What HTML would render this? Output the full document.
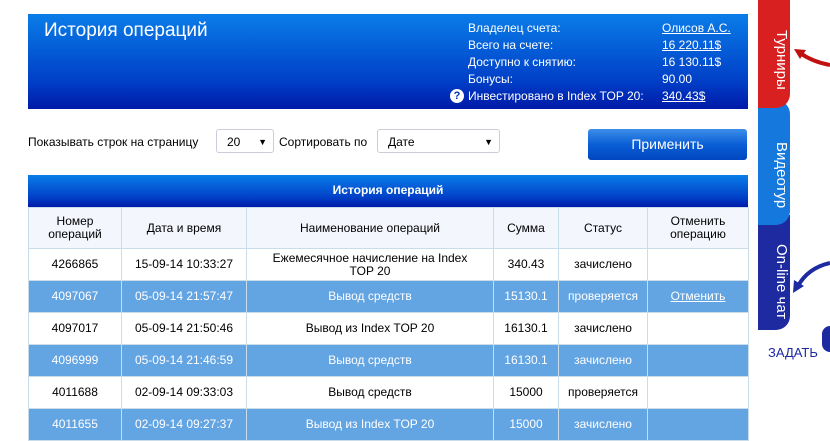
<!DOCTYPE html>
<html><head><meta charset="utf-8"><style>
body{margin:0;width:830px;height:441px;overflow:hidden;background:#fff;font-family:"Liberation Sans","DejaVu Sans",sans-serif;font-size:12px;color:#000;position:relative}
.hdr{position:absolute;left:28px;top:14px;width:720px;height:95px;background:linear-gradient(#0a7de8,#0040c8 70%,#001aa8)}
.hdr h1{position:absolute;left:16px;top:6px;margin:0;font-weight:normal;font-size:19px;color:#fff}
.info{position:absolute;left:440px;top:6px;color:#fff;font-size:12px;line-height:17px}
.info .v{position:absolute;left:194px;white-space:nowrap}
.info u{text-decoration:underline}
.q{position:absolute;left:-18px;top:83px;width:14px;height:14px;border-radius:50%;background:#fff;color:#0030b0;font-weight:bold;font-size:11px;text-align:center;line-height:14px}
.ctrl{position:absolute;top:135px;left:28px;font-size:12px;white-space:nowrap}
.sel{position:absolute;top:129px;height:24px;border:1px solid #ccd;border-radius:3px;background:#fff;font-size:12px;line-height:24px;box-sizing:border-box;padding-left:10px}
.sel:after{content:"▼";position:absolute;right:6px;top:0;font-size:9px}
.btn{position:absolute;left:588px;top:129px;width:159px;height:31px;border-radius:3px;background:linear-gradient(#3d8ee8,#0a5fd6 50%,#0046c0);color:#fff;font-size:14px;text-align:center;line-height:31px}
.tb{position:absolute;left:28px;top:175px;width:720px;height:32px;background:linear-gradient(#0a7de8,#0040c8 70%,#001aa8);color:#fff;font-weight:bold;text-align:center;line-height:30px;font-size:12px}
table{position:absolute;left:28px;top:207px;width:720px;border-collapse:collapse;table-layout:fixed}
td{border:1px solid #c8dcea;text-align:center;font-size:12px;height:31px;padding:0;line-height:13px}
tr.h td{background:#f4f6fd;height:40px}
tr.b td{background:#63a4e3;color:#fff}
tr.b u{color:#fff}
.side{position:absolute;left:758px;top:0;width:72px;height:441px}
.tab{position:absolute;left:0;width:32px;color:#fff;font-size:15px;writing-mode:vertical-rl;text-align:center}
</style></head><body>
<div class="hdr"><h1>История операций</h1>
<div class="info">
<div>Владелец счета:<span class="v"><u>Олисов А.С.</u></span></div>
<div>Всего на счете:<span class="v"><u>16 220.11$</u></span></div>
<div>Доступно к снятию:<span class="v">16 130.11$</span></div>
<div>Бонусы:<span class="v">90.00</span></div>
<div style="position:relative">Инвестировано в Index TOP 20:<span class="v"><u>340.43$</u></span><span class="q" style="top:1px">?</span></div>
</div></div>
<div class="ctrl">Показывать строк на страницу</div>
<div class="sel" style="left:216px;width:58px">20</div>
<div class="ctrl" style="left:279px">Сортировать по</div>
<div class="sel" style="left:377px;width:123px">Дате</div>
<div class="btn">Применить</div>
<div class="tb">История операций</div>
<table>
<colgroup><col style="width:93px"><col style="width:125px"><col style="width:247px"><col style="width:65px"><col style="width:89px"><col style="width:101px"></colgroup>
<tr class="h"><td>Номер<br>операций</td><td>Дата и время</td><td>Наименование операций</td><td>Сумма</td><td>Статус</td><td>Отменить<br>операцию</td></tr>
<tr><td>4266865</td><td>15-09-14 10:33:27</td><td>Ежемесячное начисление на Index<br>TOP 20</td><td>340.43</td><td>зачислено</td><td></td></tr>
<tr class="b"><td>4097067</td><td>05-09-14 21:57:47</td><td>Вывод средств</td><td>15130.1</td><td>проверяется</td><td><u>Отменить</u></td></tr>
<tr><td>4097017</td><td>05-09-14 21:50:46</td><td>Вывод из Index TOP 20</td><td>16130.1</td><td>зачислено</td><td></td></tr>
<tr class="b"><td>4096999</td><td>05-09-14 21:46:59</td><td>Вывод средств</td><td>16130.1</td><td>зачислено</td><td></td></tr>
<tr><td>4011688</td><td>02-09-14 09:33:03</td><td>Вывод средств</td><td>15000</td><td>проверяется</td><td></td></tr>
<tr class="b"><td>4011655</td><td>02-09-14 09:27:37</td><td>Вывод из Index TOP 20</td><td>15000</td><td>зачислено</td><td></td></tr>
</table>
<div class="side">
<div class="tab" style="top:215px;height:115px;background:#1e2aa0;border-radius:0 0 14px 0;padding-top:18px;box-sizing:border-box">On-line чат</div>
<div class="tab" style="top:100px;height:125px;background:#1478dc;border-radius:0 14px 14px 0;padding-top:26px;box-sizing:border-box">Видеотур</div>
<div class="tab" style="top:0;height:108px;background:#d82020;border-radius:0 0 14px 0;padding-top:12px;box-sizing:border-box">Турниры</div>
<svg style="position:absolute;left:30px;top:40px" width="42" height="30"><path d="M42 25 Q25 22 12 13" stroke="#c01010" stroke-width="4" fill="none"/><path d="M6 9 L18 10 L12 19Z" fill="#c01010"/></svg>
<svg style="position:absolute;left:30px;top:258px" width="42" height="40"><path d="M42 5 Q20 10 10 28" stroke="#1e2aa0" stroke-width="4" fill="none"/><path d="M5 35 L6 22 L16 28Z" fill="#1e2aa0"/></svg>
<div style="position:absolute;left:10px;top:345px;color:#1e2aa0;font-size:13px;white-space:nowrap">ЗАДАТЬ</div>
<div style="position:absolute;left:64px;top:326px;width:8px;height:26px;background:#1e2aa0;border-radius:8px 0 0 8px"></div>
</div>
</body></html>
